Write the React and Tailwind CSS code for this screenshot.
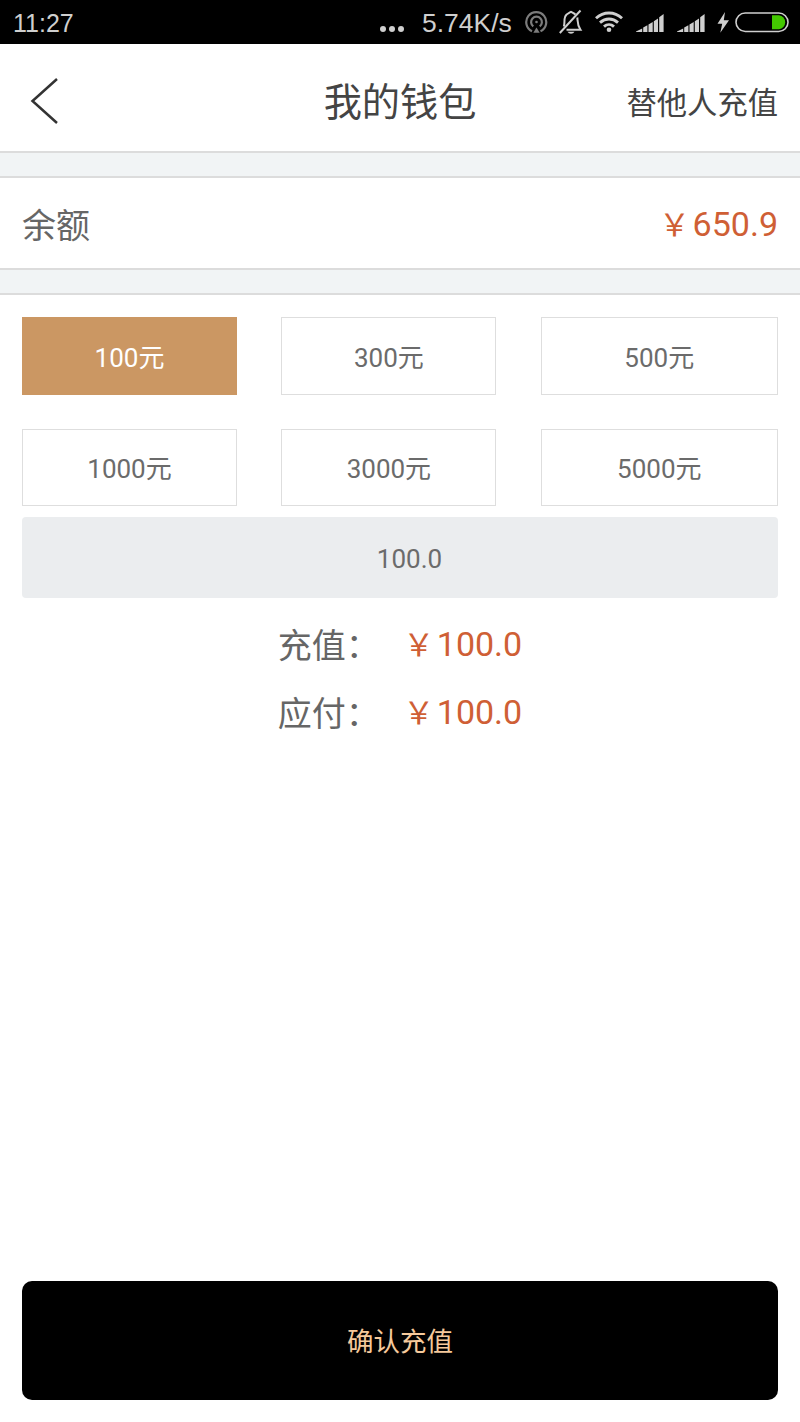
import React, { useState } from 'react';

const AMOUNTS = [100, 300, 500, 1000, 3000, 5000];

function SignalBars() {
  return (
    <svg className="h-5 w-7 shrink-0" viewBox="0 0 28 20" fill="#cfcfcf">
      <path d="M0 19v-.6l6.200-3V19zM7.200 19v-4.600l4.200-2.200V19zM12.500 19v-7.500l4.200-2.500V19zM17.800 19V8.300l4.200-2.800V19zM23.200 19V4.200L27.600 1v18z" />
    </svg>
  );
}

function StatusBar() {
  return (
    <div className="flex h-11 items-center bg-black pr-[10px] pl-[13px] font-['Liberation_Sans',sans-serif] text-[26px] text-[#cfcfcf]">
      <span className="h-11 w-[367px] text-[25px] leading-[46px]">11:27</span>
      {/* more notifications */}
      <svg className="h-11 w-[26px] shrink-0" viewBox="0 0 26 44" fill="#cfcfcf">
        <circle cx="3" cy="29" r="3" />
        <circle cx="12" cy="29" r="3" />
        <circle cx="21" cy="29" r="3" />
      </svg>
      <span className="ml-4 h-11 w-[90px] text-[26.5px] leading-[46px]">5.74K/s</span>
      {/* hotspot */}
      <svg className="ml-[13px] h-11 w-6 shrink-0" viewBox="0 0 24 44" fill="none" stroke="#7c7c7c" strokeWidth="2.200">
        <path d="M7 31.200A10 10 0 1 1 15.500 31.200" />
        <path d="M8.300 26.400A5.400 5.400 0 1 1 14.700 26.400" />
        <circle cx="11.500" cy="22" r="1.300" fill="#7c7c7c" stroke="none" />
        <path d="M11.500 27.500l3.200 5.200H8.300z" fill="#7c7c7c" stroke="none" />
      </svg>
      {/* muted */}
      <svg className="ml-[10px] h-11 w-6 shrink-0" viewBox="0 0 24 44" fill="none" stroke="#cfcfcf" strokeWidth="2">
        <path d="M.8 33L21.500 10.500" />
        <path d="M4.800 26.500C6 23.500 4.800 20 6.200 16.500 7.500 13.500 10 13 12 11.800c1.500.9 3.200 1.200 4.500 2.800M18.300 17.500c.5 3.500-.3 7 3.200 12.300H7.500" />
        <path d="M8.500 31.800h7c-1.500 2.500-5.500 2.500-7 0z" fill="#cfcfcf" stroke="none" />
      </svg>
      {/* wifi */}
      <svg className="ml-3 h-11 w-7 shrink-0" viewBox="0 0 28 44" fill="none" stroke="#cfcfcf" strokeWidth="2.900">
        <path d="M1 18.300C8.500 11.300 19.500 11.300 27 18.300" />
        <path d="M5 22.600C10.500 17.800 17.500 17.800 23 22.600" />
        <path d="M9 26.600C12 23.900 16 23.900 19 26.600" />
        <circle cx="14" cy="29.800" r="2.300" fill="#cfcfcf" stroke="none" />
      </svg>
      <div className="ml-[13px] flex gap-[13px] pt-0.5">
        <SignalBars />
        <SignalBars />
      </div>
      {/* charging */}
      <svg className="ml-3 h-11 w-3 shrink-0" viewBox="0 0 12 44" fill="#cfcfcf">
        <path d="M8 12L.5 23.700h4.700L3.300 32.800 12 20.300H6.800z" />
      </svg>
      <svg className="ml-[6px] h-11 w-[54px] shrink-0" viewBox="0 0 54 44" fill="none">
        <rect x="1" y="13" width="52" height="18.500" rx="9.250" stroke="#cfcfcf" strokeWidth="1.600" />
        <path d="M37 15.300h7a7 7 0 0 1 0 13.900h-7z" fill="#43c800" />
      </svg>
    </div>
  );
}

function Price({ value }) {
  return (
    <span className="flex items-baseline text-[#cf5f35]">
      <span className="w-[34px] pr-[2px] text-center text-[31px]">￥</span>
      {value}
    </span>
  );
}

function SummaryRow({ label, value }) {
  return (
    <div className="flex h-[68px] items-center text-[34px] leading-none">
      <span className="w-[125px] pt-[2px] text-[#666]">{label}</span>
      <div className="pb-[2px]">
        <Price value={value} />
      </div>
    </div>
  );
}

export default function App() {
  const [selected, setSelected] = useState(100);

  return (
    <div className="flex h-[1422px] w-[800px] flex-col bg-white font-[Roboto,'Noto_Sans_CJK_SC',sans-serif]">
      <StatusBar />

      {/* Header */}
      <header className="grid h-[109px] grid-cols-3 items-center border-b-2 border-[#dcdcdc] px-[22px] pt-[6px] text-[#444]">
        <button className="pl-2">
          <svg className="h-[46px] w-[29px]" viewBox="0 0 29 46" fill="none" stroke="#333" strokeWidth="2.500">
            <path d="M27 1L2.500 23 27 45" />
          </svg>
        </button>
        <h1 className="pt-[5px] text-center text-[38.200px] leading-none">我的钱包</h1>
        <button className="pt-[7px] text-right text-[30.300px] leading-none">替他人充值</button>
      </header>

      {/* Balance */}
      <div className="h-[23px] bg-[#f1f4f5]" />
      <div className="flex h-[94px] items-center justify-between border-y-2 border-[#dcdcdc] px-[22px] text-[34px] leading-none">
        <span className="pt-[5px] text-[#666]">余额</span>
        <div className="pt-[2px]">
          <Price value="650.9" />
        </div>
      </div>
      <div className="h-[25px] border-b-2 border-[#dcdcdc] bg-[#f1f4f5]" />

      <main className="flex flex-1 flex-col px-[22px] pt-[22px] pb-[22px]">
        <div className="grid grid-cols-[215px_215px_237px] gap-x-[44.400px] gap-y-[34px]">
          {AMOUNTS.map((amount) => (
            <button
              key={amount}
              onClick={() => setSelected(amount)}
              className={`h-[77.500px] border pt-[4px] text-[26px] leading-none ${
                selected === amount
                  ? 'border-[#cb9763] bg-[#cb9763] text-white'
                  : 'border-[#dedede] text-[#6b6b6b]'
              }`}
            >
              {amount}元
            </button>
          ))}
        </div>

        <div className="mt-[11px] flex h-[81px] items-center justify-center rounded-[4px] bg-[#ebedef] pt-[3px] pl-[19px] text-[26px] leading-none text-[#6b6b6b]">
          {selected.toFixed(1)}
        </div>

        <div className="mt-[13px] flex flex-col items-center">
          <SummaryRow label="充值：" value={selected.toFixed(1)} />
          <SummaryRow label="应付：" value={selected.toFixed(1)} />
        </div>

        <button className="mt-auto h-[119px] rounded-[10px] bg-black pt-[4px] text-[26.500px] leading-none text-[#f5c99b]">
          确认充值
        </button>
      </main>
    </div>
  );
}
